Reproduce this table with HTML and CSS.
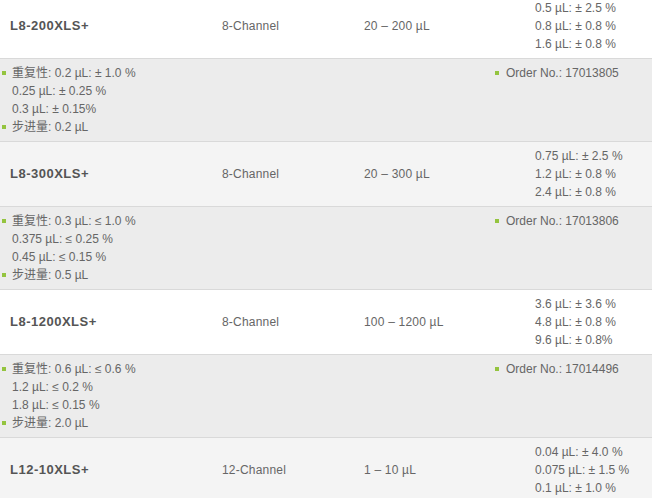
FILE: index.html
```html
<!DOCTYPE html>
<html lang="zh">
<head>
<meta charset="utf-8">
<title>Pipettes</title>
<link rel="stylesheet" href="styles.css">
</head>
<body>
<div class="table">
  <div class="row main white">
    <div class="name">L8-200XLS+</div>
    <div class="cell">8-Channel</div>
    <div class="cell">20 – 200 µL</div>
    <div class="vals">0.5 µL: ± 2.5 %<br>0.8 µL: ± 0.8 %<br>1.6 µL: ± 0.8 %</div>
  </div>
  <div class="row detail">
    <ul class="list">
      <li>重复性: 0.2 µL: ± 1.0 %<br>0.25 µL: ± 0.25 %<br>0.3 µL: ± 0.15%</li>
      <li>步进量: 0.2 µL</li>
    </ul>
    <ul class="list">
      <li>Order No.: 17013805</li>
    </ul>
  </div>
  <div class="row main grey">
    <div class="name">L8-300XLS+</div>
    <div class="cell">8-Channel</div>
    <div class="cell">20 – 300 µL</div>
    <div class="vals">0.75 µL: ± 2.5 %<br>1.2 µL: ± 0.8 %<br>2.4 µL: ± 0.8 %</div>
  </div>
  <div class="row detail">
    <ul class="list">
      <li>重复性: 0.3 µL: ≤ 1.0 %<br>0.375 µL: ≤ 0.25 %<br>0.45 µL: ≤ 0.15 %</li>
      <li>步进量: 0.5 µL</li>
    </ul>
    <ul class="list">
      <li>Order No.: 17013806</li>
    </ul>
  </div>
  <div class="row main white">
    <div class="name">L8-1200XLS+</div>
    <div class="cell">8-Channel</div>
    <div class="cell">100 – 1200 µL</div>
    <div class="vals">3.6 µL: ± 3.6 %<br>4.8 µL: ± 0.8 %<br>9.6 µL: ± 0.8%</div>
  </div>
  <div class="row detail">
    <ul class="list">
      <li>重复性: 0.6 µL: ≤ 0.6 %<br>1.2 µL: ≤ 0.2 %<br>1.8 µL: ≤ 0.15 %</li>
      <li>步进量: 2.0 µL</li>
    </ul>
    <ul class="list">
      <li>Order No.: 17014496</li>
    </ul>
  </div>
  <div class="row main grey">
    <div class="name">L12-10XLS+</div>
    <div class="cell">12-Channel</div>
    <div class="cell">1 – 10 µL</div>
    <div class="vals">0.04 µL: ± 4.0 %<br>0.075 µL: ± 1.5 %<br>0.1 µL: ± 1.0 %</div>
  </div>
</div>
</body>
</html>
```

FILE: styles.css
```css
html, body {
  margin: 0;
  padding: 0;
  background: #ffffff;
}
body {
  font-family: "Liberation Sans", Arial, "Noto Sans CJK SC", sans-serif;
  font-size: 12px;
  line-height: 18px;
  color: #666666;
  overflow: hidden;
}
.table {
  margin-top: -6px;
  width: 652px;
}
.row {
  border-bottom: 1px solid #d9d9d9;
}
.main {
  display: grid;
  grid-template-columns: 212px 142px 171px 1fr;
  align-items: center;
  padding: 5px 0 5px 10px;
  height: 54px;
}
.white { background: #ffffff; }
.grey { background: #f4f4f4; }
.name {
  font-weight: bold;
  font-size: 13px;
  letter-spacing: 0.5px;
  color: #555555;
}
.cell {
  letter-spacing: 0.2px;
}
.detail {
  display: grid;
  grid-template-columns: 495px 1fr;
  background: #ececec;
  padding: 5px 0;
  height: 72px;
}
.list {
  list-style: none;
  margin: 0;
  padding: 0;
}
.list li {
  position: relative;
  padding-left: 12px;
}
.list li::before {
  content: "";
  position: absolute;
  left: 2px;
  top: 7px;
  width: 4px;
  height: 4px;
  background: #94c43f;
}
.detail .list:last-child li {
  padding-left: 11px;
}
.detail .list:last-child li::before {
  left: 0;
}
```
